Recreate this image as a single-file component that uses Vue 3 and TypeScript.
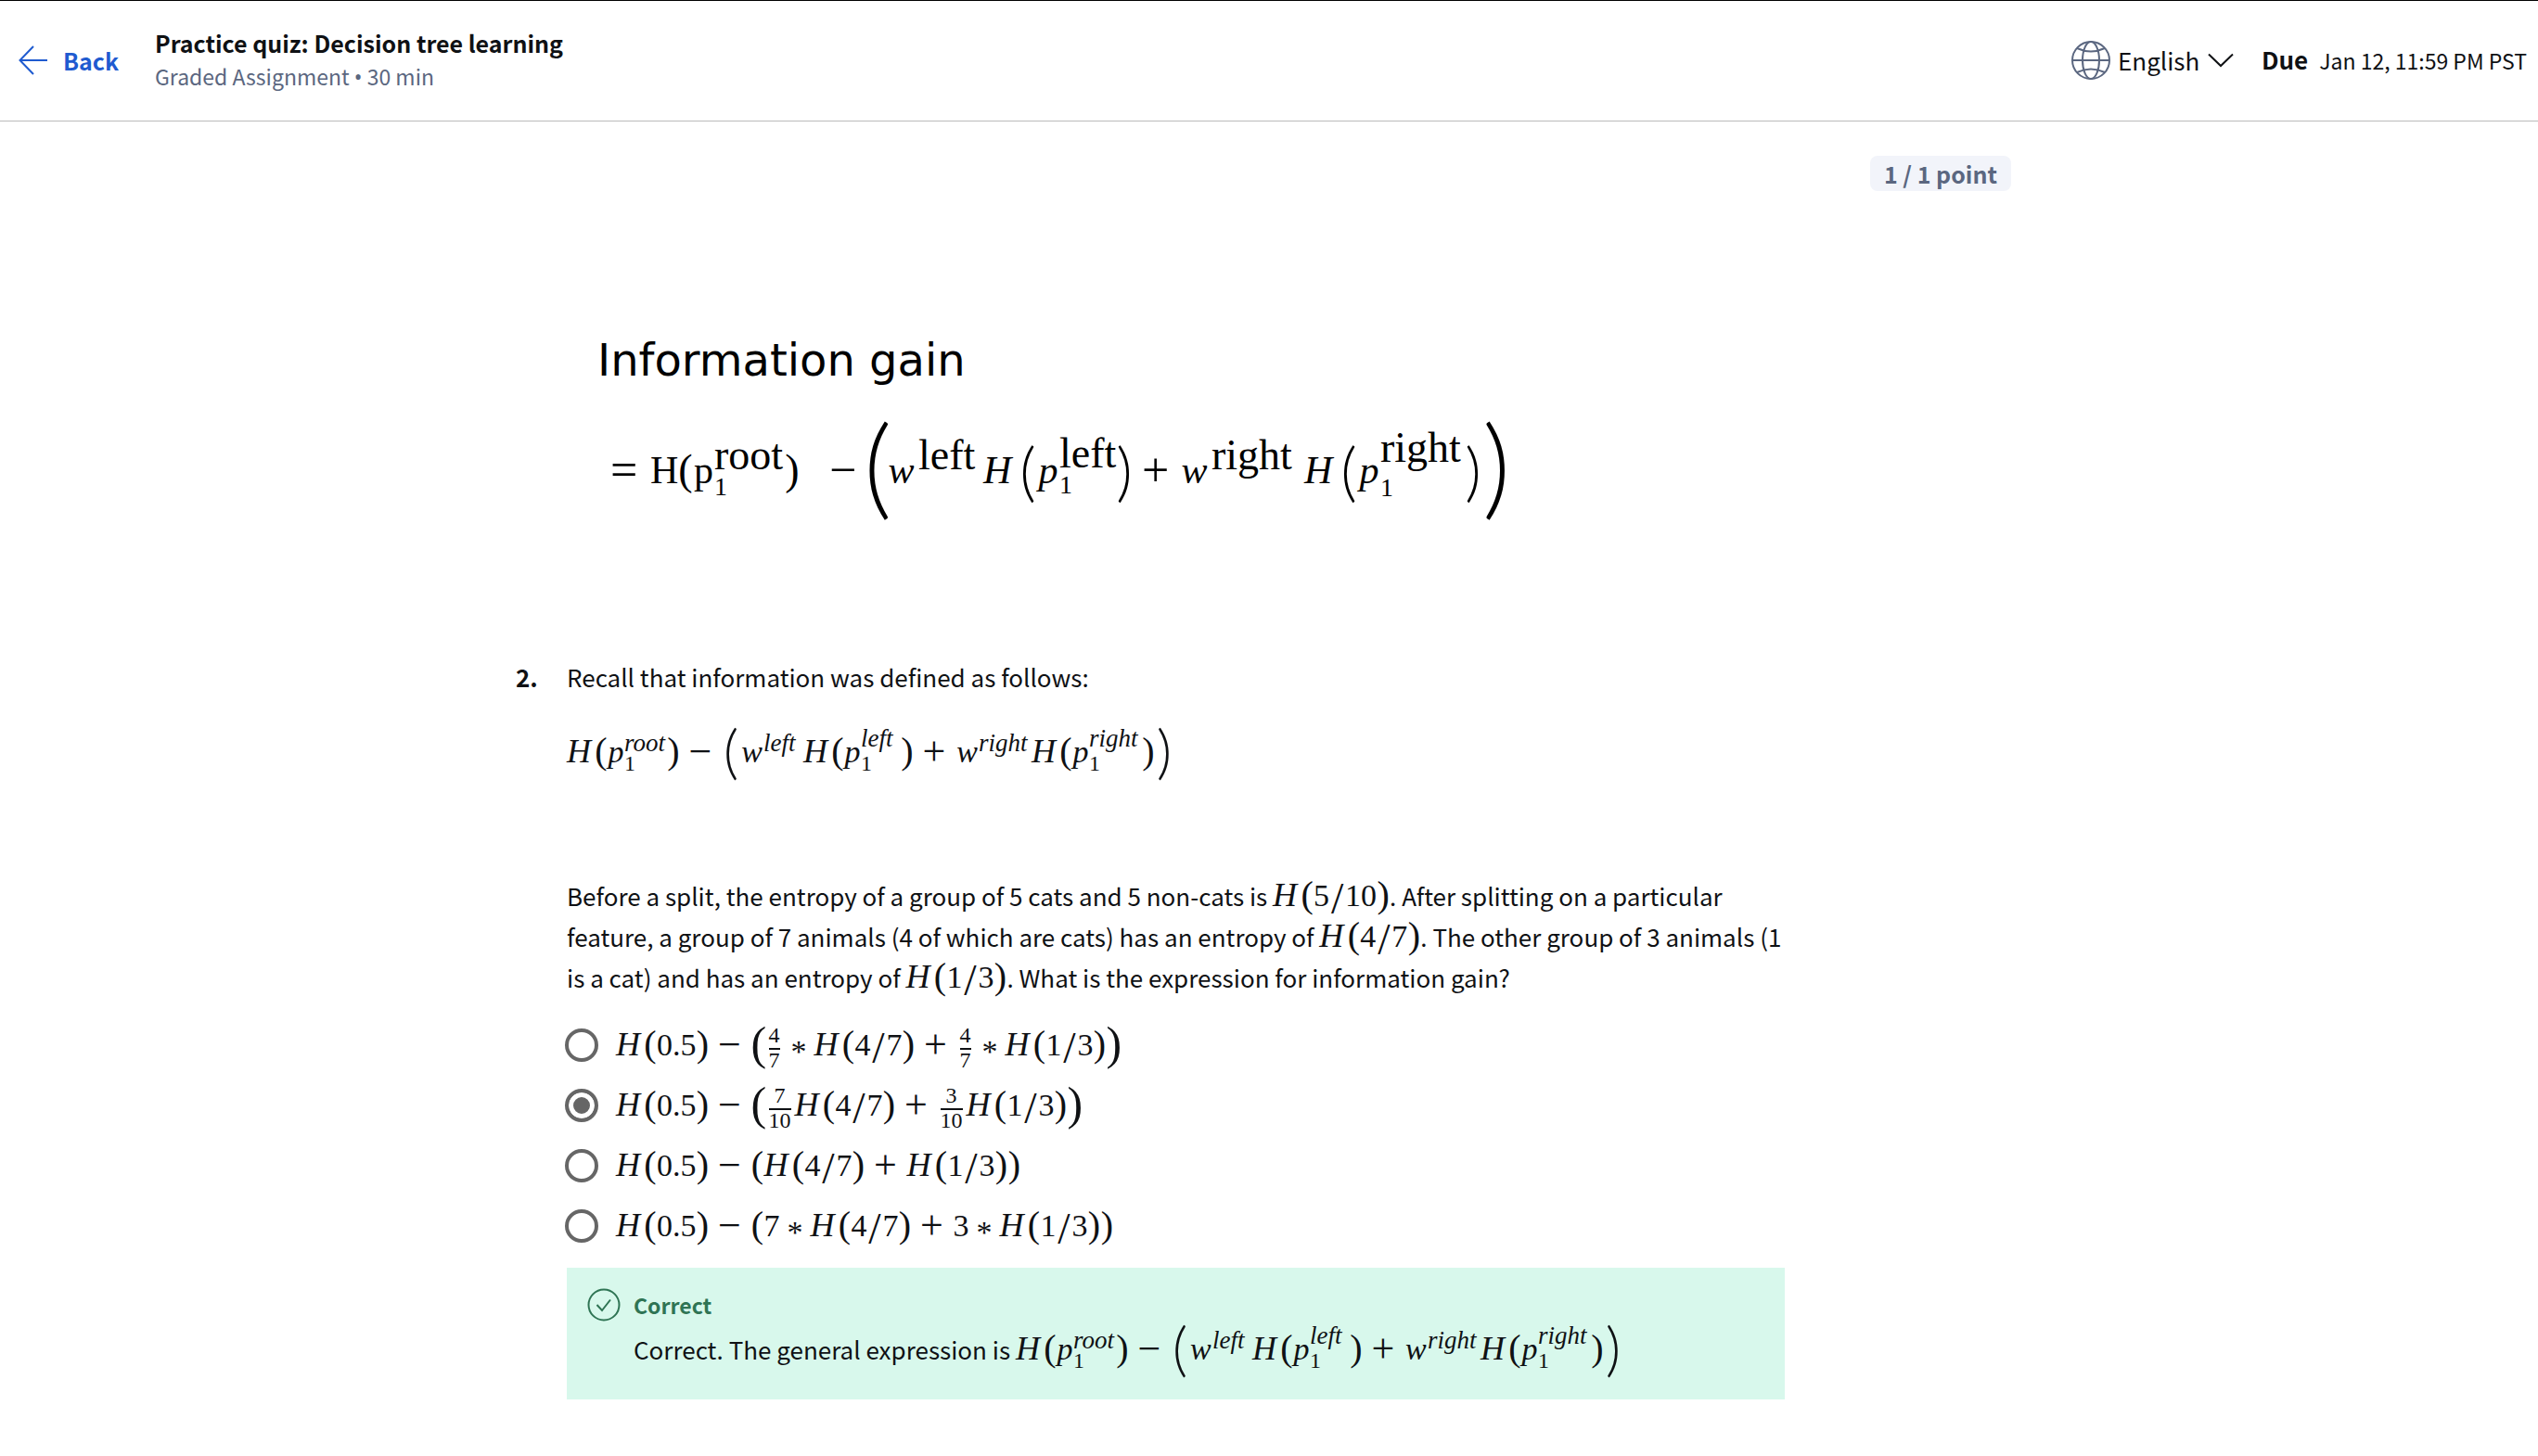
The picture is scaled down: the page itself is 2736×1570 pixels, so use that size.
<script setup lang="ts">
import { defineComponent, h, ref, type PropType, type VNode } from 'vue'

interface Token {
  kind: string
  text?: string
  sup?: string
  sub?: string
}

const kinds: Record<string, string> = {
  H: 'cap', w: 'var-w', p: 'var-p', '(': 'paren', ')': 'paren', '/': 'slash',
  '−': 'op', '+': 'op', '*': 'star', '=': 'equals', '.': 'dot',
}

// Splits a plain expression such as "H(4/7)" into single-symbol tokens.
function m(text: string): Token[] {
  return [...text].map((c) => ({ kind: kinds[c] ?? 'num', text: c }))
}
const big = (text: string): Token => ({ kind: 'big', text })
const mid = (text: string): Token => ({ kind: 'mid', text })
const up = (sup: string): Token => ({ kind: 'scripts flat ' + sup, sup })
const both = (sup: string, sub: string): Token => ({ kind: 'scripts both ' + sup, sup, sub })
const frac = (sup: string, sub: string): Token => ({ kind: 'frac', sup, sub })

const MathRun = defineComponent({
  props: { tokens: { type: Array as PropType<Token[]>, required: true } },
  setup(props) {
    const draw = (t: Token): VNode => {
      if (t.sup === undefined) return h('span', { class: ['tok', t.kind] }, t.text)
      const rows = [h('span', { class: 'upper' }, t.sup)]
      if (t.sub !== undefined) rows.push(h('span', { class: 'lower' }, t.sub))
      return h('span', { class: t.kind }, rows)
    }
    return () => h('span', { class: 'math' }, props.tokens.map(draw))
  },
})

const gain: Token[] = [
  ...m('H(p'), both('root', '1'), ...m(')−'), big('('),
  ...m('w'), up('left'), ...m('H(p'), both('left', '1'), ...m(')+w'),
  up('right'), ...m('H(p'), both('right', '1'), ...m(')'), big(')'),
]

const figure: Token[] = [
  ...m('='), { kind: 'roman', text: 'H' }, ...m('('), { kind: 'roman-p', text: 'p' },
  both('root', '1'), ...m(')'), { kind: 'op apart', text: '−' }, big('('),
  ...m('w'), up('left'), ...m('H'), mid('('), ...m('p'), both('left', '1'), mid(')'),
  ...m('+w'), up('right'), ...m('H'), mid('('), ...m('p'), both('right', '1'), mid(')'), big(')'),
]

const options: Token[][] = [
  [...m('H(0.5)−'), mid('('), frac('4', '7'), ...m('*H(4/7)+'), frac('4', '7'), ...m('*H(1/3)'), mid(')')],
  [...m('H(0.5)−'), mid('('), frac('7', '10'), ...m('H(4/7)+'), frac('3', '10'), ...m('H(1/3)'), mid(')')],
  m('H(0.5)−(H(4/7)+H(1/3))'),
  m('H(0.5)−(7*H(4/7)+3*H(1/3))'),
]

const selected = ref(1)
const language = ref('English')
</script>

<template>
  <div class="page">
    <header class="bar">
      <a class="back" href="#">
        <svg width="32" height="38" viewBox="0 0 32 38" fill="none" stroke="currentColor" stroke-width="2">
          <path d="M31 19H2M16 4L1.500 19L16 34" />
        </svg>
        <span>Back</span>
      </a>
      <div class="heading">
        <h1>Practice quiz: Decision tree learning</h1>
        <p>Graded Assignment <span class="bullet">•</span> 30 min</p>
      </div>
      <div class="tools">
        <label class="language">
          <svg class="globe" width="42" height="42" viewBox="0 0 42 42" fill="none" stroke="currentColor" stroke-width="2">
            <circle cx="21" cy="21" r="20" />
            <ellipse cx="21" cy="21" rx="9" ry="20" />
            <path d="M1 21H41M6 8Q21 15 36 8M6 34Q21 27 36 34" />
          </svg>
          <select v-model="language" aria-label="Language">
            <option>English</option>
          </select>
          <svg class="chevron" width="28" height="16" viewBox="0 0 28 16" fill="none" stroke="currentColor" stroke-width="2">
            <path d="M1 1.500L14 14L27 1.500" />
          </svg>
        </label>
        <p class="due"><strong>Due</strong><span>Jan 12, 11:59 PM PST</span></p>
      </div>
    </header>

    <main class="quiz">
      <div class="score"><span>1 / 1 point</span></div>

      <section class="figure">
        <h2>Information gain</h2>
        <div class="equation"><MathRun :tokens="figure" /></div>
      </section>

      <section class="question">
        <strong class="number">2.</strong>
        <div class="body">
          <p>Recall that information was defined as follows:</p>
          <p class="formula"><MathRun :tokens="gain" /></p>
          <p class="prompt">
            Before a split, the entropy of a group of 5 cats and 5 non-cats is <MathRun :tokens="m('H(5/10)')" />. After splitting on a particular feature, a group of 7 animals (4 of which are cats) has an entropy of <MathRun :tokens="m('H(4/7)')" />. The other group of 3 animals (1 is a cat) and has an entropy of <MathRun :tokens="m('H(1/3)')" />. What is the expression for information gain?
          </p>
          <div class="options" role="radiogroup">
            <label v-for="(option, i) in options" :key="i" class="option">
              <input v-model="selected" type="radio" name="answer" :value="i" />
              <span><MathRun :tokens="option" /></span>
            </label>
          </div>
          <div class="feedback">
            <svg width="36" height="36" viewBox="0 0 36 36" fill="none" stroke="currentColor" stroke-width="2">
              <circle cx="18" cy="18" r="16.500" />
              <path d="M10.500 18L16 24L25 12.500" />
            </svg>
            <div>
              <strong>Correct</strong>
              <p>Correct. The general expression is <MathRun :tokens="gain" /></p>
            </div>
          </div>
        </div>
      </section>
    </main>
  </div>
</template>

<style>
body {
  margin: 0;
  background: #fff;
}
</style>

<style scoped>
.page {
  border-top: 1px solid #000;
  color: #0f1114;
  font-family: "Noto Sans CJK SC", "Noto Sans", sans-serif;
  font-size: 26px;
  line-height: 44px;
}
h1, h2, p {
  margin: 0;
}
.bar {
  display: flex;
  align-items: center;
  height: 127px;
  padding: 0 12px 2px 20px;
  border-bottom: 1px solid #bbb;
}
.back {
  display: flex;
  align-items: center;
  gap: 16px;
  width: 147px;
  color: #1f5bd0;
  font-size: 25px;
  font-weight: 700;
  text-decoration: none;
}
.heading h1 {
  font-size: 25px;
  line-height: 36px;
}
.heading p {
  color: #5b6780;
  font-size: 23px;
  line-height: 36px;
}
.bullet {
  font-family: "Noto Sans", sans-serif;
}
.tools {
  display: flex;
  align-items: center;
  gap: 30px;
  margin-left: auto;
}
.language {
  display: flex;
  align-items: center;
  gap: 8px;
}
.globe {
  color: #5b6780;
}
select {
  appearance: none;
  padding: 0;
  border: 0;
  background: none;
  color: inherit;
  font: inherit;
}
.due {
  display: flex;
  align-items: baseline;
  gap: 12px;
}
.due span {
  font-size: 23px;
}
.quiz {
  max-width: 1612px;
  margin: 0 auto;
  padding: 37px 12px 60px 0;
}
.score {
  display: flex;
  justify-content: flex-end;
}
.score span {
  padding: 0 15px;
  border-radius: 8px;
  background: #f2f4fa;
  color: #5b6780;
  font-size: 25px;
  font-weight: 700;
  line-height: 38px;
}
.figure {
  padding: 150px 0 0 88px;
  color: #000;
}
.figure h2 {
  font: 400 48px/64px "DejaVu Sans", Verdana, sans-serif;
}
.equation {
  padding: 63px 0 0 14px;
}
.question {
  display: flex;
  margin-top: 176px;
}
.number {
  flex: none;
  width: 55px;
}
.body {
  flex: none;
  width: 1313px;
}
.formula {
  margin-top: 37px;
}
.prompt {
  margin-top: 111px;
}
.options {
  display: flex;
  flex-direction: column;
  gap: 21px;
  margin: 29px 0 23px;
}
.option {
  display: flex;
  align-items: center;
}
input[type="radio"] {
  appearance: none;
  box-sizing: border-box;
  width: 36px;
  height: 36px;
  margin: 0 19px 0 -2px;
  border: 4px solid #666;
  border-radius: 50%;
}
input[type="radio"]:checked {
  background: #666;
  box-shadow: inset 0 0 0 5px #fff;
}
.feedback {
  display: flex;
  gap: 14px;
  padding: 22px;
  background: #d8f8ec;
  color: #2f7454;
}
.feedback strong {
  display: block;
  font-size: 23px;
  line-height: 36px;
}
.feedback p {
  margin: 8px 0 10px;
  color: #0f1114;
}

/* Math layout: every symbol sits in a zero-height box on the text baseline. */
.page :deep(.math) {
  font-family: "Liberation Serif", serif;
  font-size: 34px;
  line-height: 0;
  white-space: nowrap;
}
.page :deep(.tok) {
  display: inline-block;
  text-align: center;
}
.page :deep(.cap) {
  width: 30px;
  font-size: 36px;
  font-style: italic;
  text-align: left;
}
.page :deep(.var-w) {
  width: 25px;
  font-style: italic;
}
.page :deep(.var-p) {
  width: 18px;
  font-style: italic;
}
.page :deep(.paren) {
  width: 14px;
  font-size: 40px;
  vertical-align: -1px;
}
.page :deep(.slash) {
  width: 17px;
  font-size: 48px;
  vertical-align: -8px;
}
.page :deep(.op),
.page :deep(.equals) {
  width: 26px;
  margin: 0 10px 0 9px;
  font-size: 44px;
  vertical-align: -3px;
}
.page :deep(.star) {
  width: 17px;
  margin: 0 8px;
  vertical-align: -7px;
}
.page :deep(.big) {
  width: 20px;
  font-family: Lato, sans-serif;
  font-size: 64px;
  font-weight: 300;
  vertical-align: -11px;
}
.page :deep(.mid) {
  width: 16px;
  font-size: 50px;
  vertical-align: -4px;
}
.page :deep(.scripts) {
  display: inline-flex;
  flex-direction: column;
  vertical-align: 12px;
}
.page :deep(.upper) {
  font-size: 27px;
  font-style: italic;
}
.page :deep(.lower) {
  margin-top: 22px;
  font-size: 24px;
}
.page :deep(.root) {
  width: 46px;
}
.page :deep(.left) {
  width: 43px;
}
.page :deep(.right) {
  width: 57px;
}
.page :deep(.both.left),
.page :deep(.both.right) {
  vertical-align: 17px;
}
.page :deep(.left .lower),
.page :deep(.right .lower) {
  margin-top: 27px;
}
.page :deep(.frac) {
  display: inline-flex;
  flex-direction: column;
  align-items: center;
  margin: 0 4px 0 3px;
  vertical-align: 14px;
}
.page :deep(.frac .upper) {
  font-size: 24px;
  font-style: normal;
}
.page :deep(.frac .lower) {
  align-self: stretch;
  margin-top: 14px;
  padding-top: 11px;
  border-top: 2px solid;
  text-align: center;
}

/* The slide equation uses a heavier, larger setting of the same symbols. */
.figure :deep(.math) {
  font-size: 42px;
}
.figure :deep(.roman) {
  width: 30px;
}
.figure :deep(.roman-p) {
  width: 23px;
}
.figure :deep(.cap) {
  width: 38px;
  margin-left: 10px;
  font-size: 42px;
}
.figure :deep(.var-w) {
  width: 37px;
}
.figure :deep(.var-p) {
  width: 24px;
}
.figure :deep(.paren) {
  width: 16px;
  font-size: 46px;
}
.figure :deep(.op) {
  margin: 0 12px 0 9px;
  font-size: 52px;
}
.figure :deep(.equals) {
  margin: 0 17px 0 0;
  font-size: 52px;
}
.figure :deep(.apart) {
  margin: 0 11px 0 32px;
}
.figure :deep(.big) {
  width: 22px;
  font-size: 118px;
  vertical-align: -24px;
}
.figure :deep(.mid) {
  width: 20px;
  font-family: Lato, sans-serif;
  font-size: 68px;
  font-weight: 300;
  vertical-align: -12px;
}
.figure :deep(.upper) {
  font-size: 46px;
  font-style: normal;
}
.figure :deep(.lower) {
  font-size: 28px;
}
.figure :deep(.scripts) {
  vertical-align: 15px;
}
.figure :deep(.root) {
  width: 76px;
}
.figure :deep(.left) {
  width: 60px;
}
.figure :deep(.right) {
  width: 90px;
}
.figure :deep(.both.right) {
  vertical-align: 23px;
}
.figure :deep(.scripts .lower) {
  margin-top: 34px;
}
.figure :deep(.right .lower) {
  margin-top: 43px;
}
</style>
